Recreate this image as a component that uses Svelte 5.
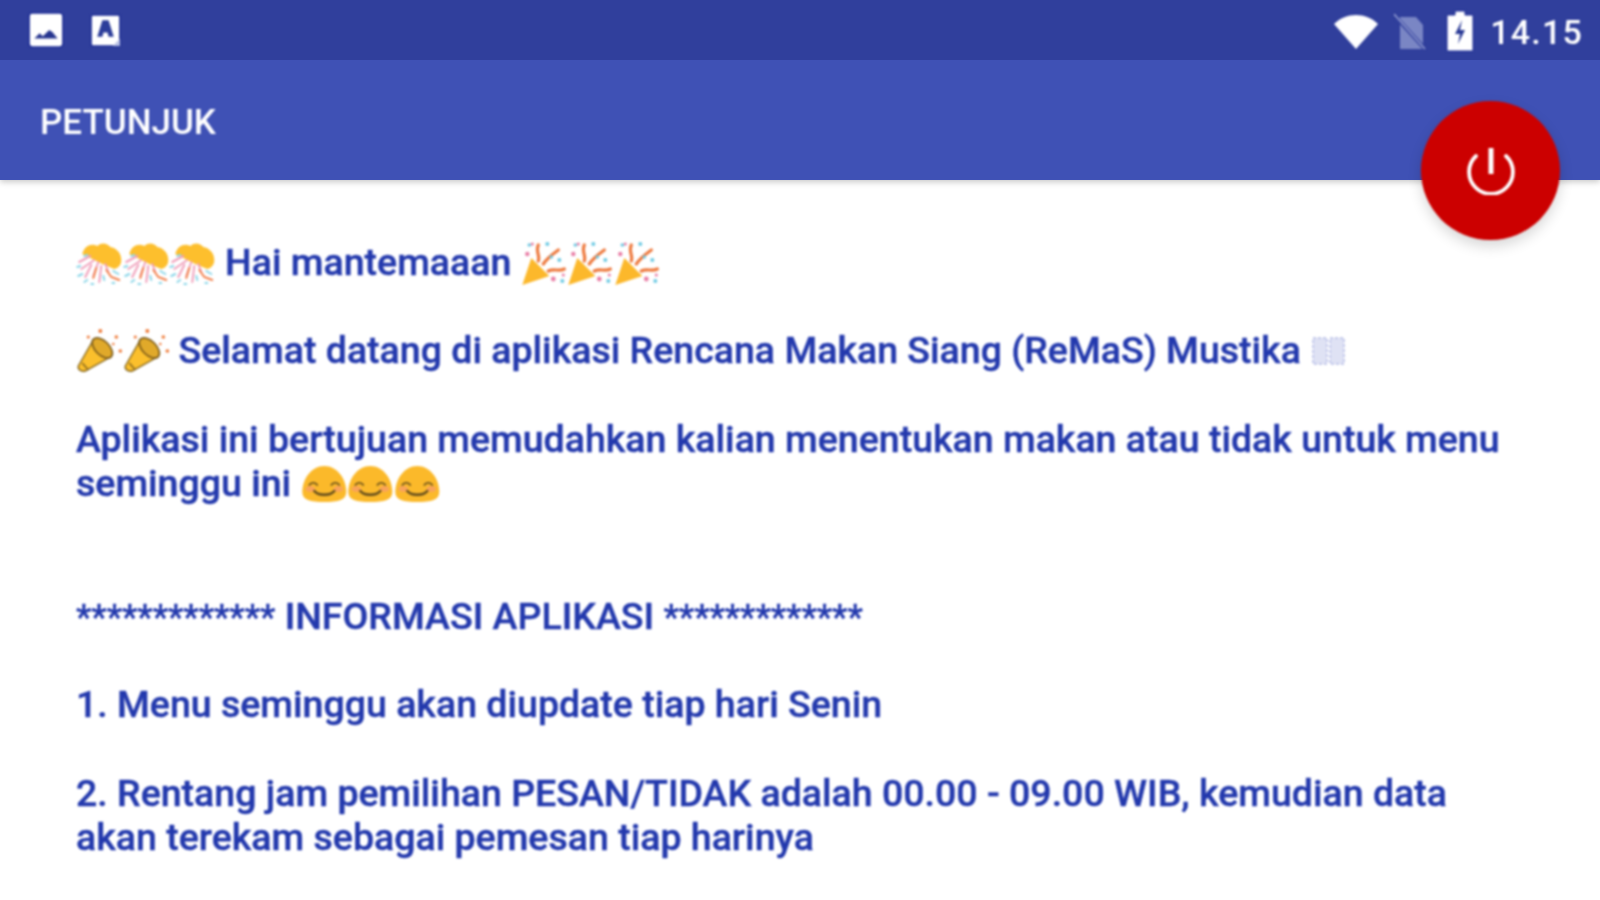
<script>
  const confetti = [0, 1, 2];
</script>

<svelte:head><title>Petunjuk</title></svelte:head>

<svg class="defs" width="0" height="0" aria-hidden="true">
  <defs>
    <symbol id="ball" viewBox="0 0 46 46">
      <path d="M6 14C8 5 16 3 21 6c4-4 10-3 13 1 6 1 11 6 11 13 0 5-3 8-7 9L26 24z" fill="#fdbf2d"/>
      <g fill="none" stroke-width="2" stroke-linecap="round">
        <path d="M3 22l11-6M5 29l13-9M15 25l-6 12M22 22l-5 14M25 26l-2 16M29 24l3 8" stroke="#f0a0bb"/>
        <path d="M30 30l5 7 8 3M20 28l-3 10" stroke="#f2814c"/>
        <path d="M1 27l3-1M2 36l4-2M8 42l3-2M36 43l2 0M15 44l2 0M37 31l5 3M8 16l3-1M27 36l1 4" stroke="#8bd6e8"/>
      </g>
    </symbol>
    <symbol id="popper" viewBox="0 0 46 46">
      <path d="M1 45l9-27 18 18z" fill="#fcb82b"/>
      <g fill="none" stroke-linecap="round" stroke-width="3.2">
        <path d="M17 21c2-6-3-9 0-16M22 24c4-6 8-9 15-14M27 31c6-3 10 1 16-2" stroke="#ee7a3f"/>
      </g>
      <g fill="#6cc9e3">
        <circle cx="8" cy="5" r="1.8"/><circle cx="26" cy="4" r="2"/><circle cx="38" cy="20" r="2"/><circle cx="41" cy="41" r="2"/><circle cx="30" cy="17" r="1.8"/>
      </g>
      <g fill="#e97fa6">
        <circle cx="6" cy="14" r="2.2"/><circle cx="32" cy="39" r="2.4"/><circle cx="42" cy="35" r="1.6"/><circle cx="11" cy="4" r="1.6"/>
      </g>
    </symbol>
    <symbol id="horn" viewBox="0 0 46 46">
      <path d="M2 38L17 12l17 17-25 14c-3 1-8-1-7-5z" fill="#fbbf2c" stroke="#8a6a1f" stroke-width="1.4"/>
      <ellipse cx="26" cy="20" rx="7" ry="12.5" transform="rotate(-45 26 20)" fill="#e0a92a" stroke="#7a5a1a" stroke-width="1.6"/>
      <path d="M6 35l6 7" stroke="#8a6a1f" stroke-width="1.6"/>
      <g fill="#ef7d3c">
        <circle cx="24" cy="3" r="2"/><circle cx="40" cy="9" r="1.8"/><circle cx="44" cy="23" r="1.8"/><circle cx="37" cy="16" r="1.3"/><circle cx="12" cy="9" r="1.6"/>
      </g>
    </symbol>
    <symbol id="smile" viewBox="0 0 46 46">
      <path d="M23 5c13 0 22 13 22 26 0 8-8 10-22 10S1 39 1 31C1 18 10 5 23 5z" fill="#fbb92a"/>
      <ellipse cx="9" cy="28" rx="5" ry="3" fill="#f9a35a"/>
      <ellipse cx="37" cy="28" rx="5" ry="3" fill="#f9a35a"/>
      <g fill="none" stroke="#5f4a1c" stroke-linecap="round">
        <path d="M8 24c2-3 6-3 8 0M30 24c2-3 6-3 8 0" stroke-width="1.6"/>
        <path d="M13 30c4 5 16 5 20 0" stroke-width="2.4"/>
      </g>
    </symbol>
  </defs>
</svg>

<div class="screen">
  <header>
    <div class="status">
      <div class="status-left soft">
        <svg class="ic-image" viewBox="0 0 34 34">
          <rect x="1" y="1" width="32" height="32" rx="3" fill="#fff" stroke="#1f2f96" stroke-width="1.5"/>
          <path d="M6 25l5-5 3 3 6-6 3 2 5 6z" fill="#26358f"/>
        </svg>
        <svg class="ic-a" viewBox="0 0 30 32">
          <rect x="1" y="1" width="28" height="30" rx="2" fill="#fff" stroke="#1f2f96" stroke-width="1.5"/>
          <path d="M12 6h6l5 16h-5l-1-4h-4l-1 4H7z" fill="#2c3d9a"/>
          <path d="M22 31l7-7v7z" fill="#b9c1e4"/>
        </svg>
      </div>
      <div class="status-right soft">
        <svg class="ic-wifi" viewBox="0 0 46 38">
          <path d="M1 12C13 0 33 0 45 12L23 37z" fill="#fff"/>
        </svg>
        <svg class="ic-sim" viewBox="0 0 32 38">
          <path d="M6 4h16l7 8v24H6z" fill="#7a86c4"/>
          <path d="M1 3l30 33" stroke="#303f9c" stroke-width="4"/>
          <path d="M0 1l31 35" stroke="#8f99cf" stroke-width="1.6"/>
        </svg>
        <svg class="ic-batt" viewBox="0 0 28 42">
          <path d="M9 1h10v4h8v36H1V5h8z" fill="#fff" stroke="#1f2f96" stroke-width="1"/>
          <path d="M16 10l-7 14h5l-2 10 7-14h-5z" fill="#2a3a96"/>
        </svg>
        <span class="time">14.15</span>
      </div>
    </div>
    <div class="appbar"><h1 class="soft">PETUNJUK</h1></div>
  </header>

  <button class="fab soft" aria-label="Keluar">
    <svg viewBox="0 0 48 48" width="48" height="48">
      <path d="M9 9a21.9 21.9 0 1 0 30 0" fill="none" stroke="#fff" stroke-width="3.8" stroke-linecap="round"/>
      <path d="M24 1v26" stroke="#fff" stroke-width="5"/>
    </svg>
  </button>

  <main class="soft">
    <p>
      <span class="emo">{#each confetti as _}<svg class="e"><use href="#ball"/></svg>{/each}</span>
      Hai mantemaaan
      <span class="emo">{#each confetti as _}<svg class="e"><use href="#popper"/></svg>{/each}</span>
    </p>
    <p>
      <span class="emo"><svg class="e"><use href="#horn"/></svg><svg class="e"><use href="#horn"/></svg></span>
      Selamat datang di aplikasi Rencana Makan Siang (ReMaS) Mustika
      <svg class="tofu" viewBox="0 0 34 30">
        <g fill="#dfe2f4" stroke="#b7bde6" stroke-width="1.5" stroke-dasharray="3 2">
          <rect x="1" y="2" width="14" height="26"/>
          <rect x="18" y="2" width="14" height="26"/>
        </g>
      </svg>
    </p>
    <p class="gap-after">
      Aplikasi ini bertujuan memudahkan kalian menentukan makan atau tidak untuk menu
      seminggu ini
      <span class="emo">{#each confetti as _}<svg class="e"><use href="#smile"/></svg>{/each}</span>
    </p>
    <p><span class="stars">*************</span> INFORMASI APLIKASI <span class="stars">*************</span></p>
    <p>1. Menu seminggu akan diupdate tiap hari Senin</p>
    <p>2. Rentang jam pemilihan PESAN/TIDAK adalah 00.00 - 09.00 WIB, kemudian data akan terekam sebagai pemesan tiap harinya</p>
  </main>
</div>

<style>
  :global(body) {
    margin: 0;
    background: #fff;
    overflow: hidden;
  }
  .defs {
    position: absolute;
  }
  .screen {
    position: relative;
    width: 1600px;
    height: 900px;
    overflow: hidden;
    font-family: Roboto, "Noto Sans", sans-serif;
  }
  .soft {
    filter: blur(0.8px);
  }
  header {
    position: relative;
    z-index: 1;
    box-shadow: 0 2px 6px rgba(0, 0, 0, 0.22);
  }
  .status {
    height: 60px;
    background: #303f9c;
    display: flex;
    align-items: center;
    justify-content: space-between;
    padding: 0 17px 0 28px;
  }
  .status-left,
  .status-right {
    display: flex;
    align-items: center;
  }
  .ic-image {
    width: 36px;
    height: 36px;
    margin-right: 26px;
  }
  .ic-a {
    width: 31px;
    height: 33px;
  }
  .ic-wifi {
    width: 46px;
    height: 38px;
    margin-right: 15px;
    margin-top: 2px;
  }
  .ic-sim {
    width: 32px;
    height: 38px;
    margin-right: 20px;
    margin-top: 4px;
  }
  .ic-batt {
    width: 28px;
    height: 42px;
    margin-right: 16px;
    margin-top: 2px;
  }
  .time {
    color: #fff;
    font-size: 34px;
    font-weight: 500;
    letter-spacing: 1.2px;
    margin-top: 3px;
  }
  .appbar {
    height: 120px;
    background: #3f51b5;
    display: flex;
    align-items: center;
    padding: 4px 0 0 40px;
    box-sizing: border-box;
  }
  h1 {
    margin: 0;
    color: #fff;
    font-size: 35px;
    font-weight: 500;
  }
  .fab {
    position: absolute;
    z-index: 2;
    left: 1421px;
    top: 101px;
    width: 139px;
    height: 139px;
    border: 0;
    padding: 0;
    border-radius: 50%;
    background: #cc0000;
    box-shadow: 0 6px 14px rgba(0, 0, 0, 0.16);
    display: flex;
    align-items: center;
    justify-content: center;
  }
  main {
    padding: 59.5px 76px 0;
    color: #2339ad;
    font-size: 37.5px;
    font-weight: 500;
    line-height: 44.3px;
    -webkit-text-stroke: 0.4px #2339ad;
  }
  p {
    margin: 0 0 44.3px;
  }
  .gap-after {
    margin-bottom: 88.6px;
  }
  .stars {
    font-size: 34.6px;
    line-height: 1;
  }
  .emo {
    display: inline-flex;
    height: 30px;
    align-items: center;
    vertical-align: -4px;
    transform: translateY(7px);
  }
  .e {
    width: 46.6px;
    height: 46px;
  }
  .tofu {
    width: 34px;
    height: 30px;
    margin-left: 2px;
    vertical-align: -3px;
  }
</style>
